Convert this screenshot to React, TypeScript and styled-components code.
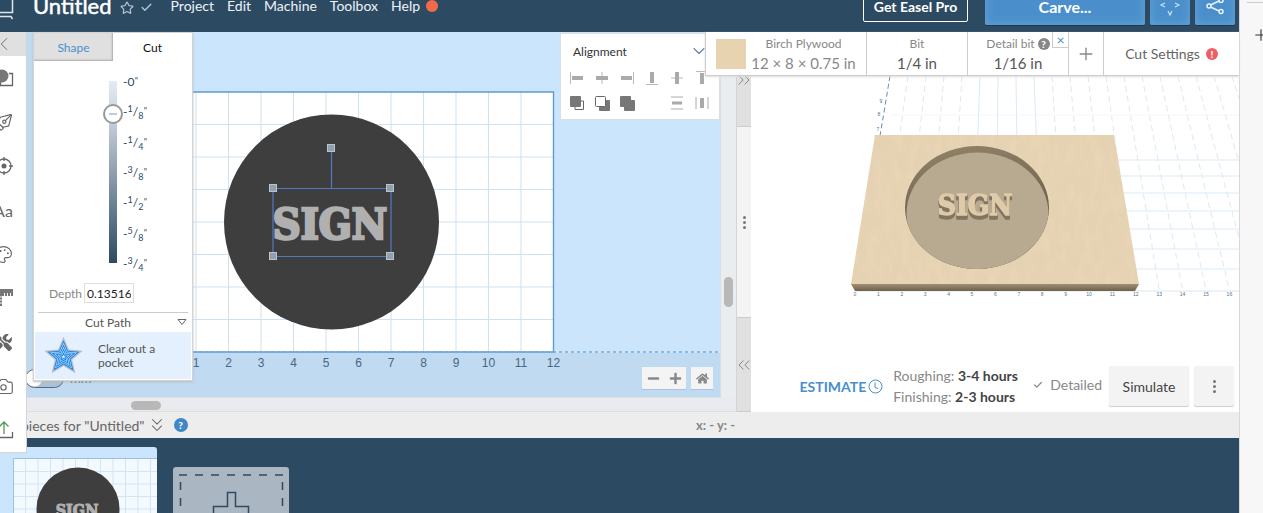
import React from 'react';
import styled, { createGlobalStyle } from 'styled-components';
import {
  Camera, ChevronDown, ChevronLeft, ChevronsDown, ChevronsLeft, ChevronsRight,
  Check, Palette, PenTool, Plus, Star,
} from 'lucide-react';
import { FaHome, FaMinus, FaPlus, FaTools } from 'react-icons/fa';

const navy = '#2d4a63';
const blue = '#4a8fcb';

const Global = createGlobalStyle`
  * { box-sizing: border-box; }
  html, body { margin: 0; height: 100%; overflow: hidden; }
  body { font-family: Lato, "Liberation Sans", sans-serif; font-size: 14px; color: #555; background: #f7f7f7; }
  #root { height: 100%; }
  button, input { font: inherit; color: inherit; margin: 0; }
  button { cursor: pointer; padding: 0; border: 0; background: none; }
  svg { display: block; flex: none; }
`;

const Page = styled.div`
  display: flex;
  height: 100vh;
  overflow: hidden;
`;
const Main = styled.main`
  position: relative;
  flex: 1;
  min-width: 0;
  display: flex;
  flex-direction: column;
  border-right: 1px solid #d8d8d8;
  background: #fff;
`;
const BrowserRail = styled.aside`
  width: 23px;
  overflow: hidden;
  padding: 7px 0 0 7px;
  background: #f7f7f7;
`;
const RailTabs = styled.div`
  width: 24px;
  height: 56px;
  margin-top: -5px;
  border-top: 1px solid #ccc;
  padding: 23px 0 0 5px;
  color: #333;
`;

/* Header */
const Header = styled.header`
  flex: none;
  display: flex;
  align-items: center;
  height: 52px;
  margin-top: -20px;
  padding-right: 4px;
  background: ${navy};
  color: #eef3f8;
`;
const Title = styled.h1`
  margin: 0 8px 0 19px;
  font-size: 22px;
  line-height: 28px;
  font-weight: 400;
  color: #fff;
  -webkit-text-stroke: 0.5px #fff;
`;
const TitleIcons = styled.div`
  display: flex;
  gap: 6px;
  padding-top: 4px;
  color: #b7c6d4;
`;
const Nav = styled.nav`
  display: flex;
  align-items: center;
  gap: 13px;
  margin-left: 18px;
  flex: 1;
`;
const NavLink = styled.a`
  color: #eef3f8;
  text-decoration: none;
  line-height: 20px;
`;
const Dot = styled.span`
  width: 12px;
  height: 12px;
  border-radius: 50%;
  margin-left: -7px;
  background: #f26b48;
`;
const ProButton = styled.button`
  width: 105px;
  height: 32px;
  margin-right: 17px;
  border: 1px solid #fff;
  border-radius: 2px;
  font-weight: 700;
  color: #fff;
`;
const ActionButton = styled.button<{ $wide?: boolean }>`
  display: flex;
  align-items: center;
  justify-content: center;
  width: ${(p) => (p.$wide ? 160 : 40)}px;
  height: 38px;
  border-radius: 2px;
  background: ${blue};
  box-shadow: inset 0 0 10px #68a3d6, 0 1px 0 #20384d;
  font-size: 16px;
  font-weight: 700;
  color: #fff;
`;
const ActionGroup = styled.div`
  display: flex;
  gap: 5px;
`;

/* Workspace */
const Workspace = styled.section`
  flex: none;
  display: flex;
  height: 380px;
`;
const Editor = styled.div`
  position: relative;
  flex: 736 1 0;
  min-width: 0;
  display: grid;
  grid-template: 1fr 15px / 1fr 15px;
  background: #eaebee;
`;
const Surface = styled.div`
  position: relative;
  overflow: hidden;
  background: #cbe5fd;
  border-right: 1px solid #dcdfe2;
  > svg { width: 100%; height: 100%; }
`;
const VTrack = styled.div`
  padding: 245px 3px 0;
  background: #e9edf0;
`;
const HTrack = styled.div`
  padding: 3px 0 0 131px;
  border-top: 1px solid #dcdfe2;
  border-bottom: 1px solid #dcdfe2;
`;
const Thumb = styled.div<{ $w: number; $h: number }>`
  width: ${(p) => p.$w}px;
  height: ${(p) => p.$h}px;
  border-radius: 5px;
  background: #b8b8b8;
`;
const Corner = styled.div`
  border-bottom: 1px solid #dcdfe2;
`;
const ZoomControls = styled.div`
  position: absolute;
  right: 7px;
  bottom: 8px;
  display: flex;
  gap: 5px;
  color: #888;
`;
const ZoomGroup = styled.div`
  display: flex;
  background: #f4f4f4;
  box-shadow: 0 1px 0 #a9c4dc;
`;
const ZoomButton = styled.button`
  display: flex;
  align-items: center;
  justify-content: center;
  width: 22px;
  height: 22px;
`;
const UnitToggle = styled.label`
  position: absolute;
  left: 25px;
  bottom: 9px;
  display: flex;
  align-items: center;
  gap: 6px;
  font-size: 13px;
  line-height: 20px;
  color: #4a6683;
`;
const Switch = styled.input`
  appearance: none;
  width: 39px;
  height: 19px;
  border: 1px solid #667;
  border-radius: 10px;
  background: radial-gradient(circle at 8px 8px, #fff 8px, #a9c2d9 9px);
`;

const Splitter = styled.div`
  flex: none;
  width: 15px;
  display: flex;
  flex-direction: column;
  border-left: 1px solid #d4d4d4;
  background: #f4f4f4;
  color: #888;
`;
const SplitButton = styled.button`
  display: flex;
  align-items: center;
  justify-content: center;
  height: 95px;
  background: #e0e0e0;
  border: solid #ccc;
  border-width: 1px 0;
`;
const Grip = styled.div`
  flex: 1;
  display: flex;
  flex-direction: column;
  align-items: center;
  justify-content: center;
  gap: 2px;
`;
const GripDot = styled.span`
  width: 3px;
  height: 3px;
  border-radius: 50%;
  background: #777;
`;

/* Preview */
const Preview = styled.div`
  flex: 488 1 0;
  min-width: 0;
  display: flex;
  flex-direction: column;
  background: #fff;
`;
const Scene = styled.div`
  flex: 1;
  overflow: hidden;
  > svg { width: 100%; height: 100%; }
`;
const EstimateRow = styled.div`
  display: flex;
  align-items: center;
  justify-content: flex-end;
  height: 50px;
  padding: 0 5px 2px 0;
`;
const EstimateLink = styled.a`
  display: flex;
  align-items: center;
  gap: 2px;
  margin-right: 10px;
  color: ${blue};
  font-weight: 700;
  text-decoration: none;
`;
const Times = styled.div`
  width: 124px;
  margin-right: 16px;
  line-height: 21px;
  color: #888;
  white-space: nowrap;
  strong { color: #444; }
`;
const Detailed = styled.span`
  display: flex;
  align-items: center;
  gap: 7px;
  margin-right: 7px;
  padding-bottom: 3px;
  color: #888;
`;
const GreyButton = styled.button<{ $w: number }>`
  display: flex;
  flex-direction: column;
  gap: 2px;
  align-items: center;
  justify-content: center;
  width: ${(p) => p.$w}px;
  height: 40px;
  margin-left: ${(p) => (p.$w < 60 ? 5 : 0)}px;
  border-radius: 2px;
  background: #f3f3f3;
  box-shadow: 0 1px 1px #ccc;
  color: #444;
`;

/* Overlays */
const ToolRail = styled.div`
  position: absolute;
  z-index: 3;
  left: -19px;
  top: 32px;
  width: 46px;
  background: #fff;
  border-right: 1px solid #d4d4d4;
  border-bottom: 1px solid #d4d4d4;
  color: #666;
`;
const Tool = styled.button<{ $collapse?: boolean }>`
  display: flex;
  align-items: center;
  justify-content: center;
  width: 100%;
  height: ${(p) => (p.$collapse ? 24 : 44)}px;
  background: ${(p) => (p.$collapse ? '#e0e0e0' : '#fff')};
  font-size: 16px;
`;

const CutPanel = styled.section`
  position: absolute;
  z-index: 2;
  left: 33px;
  top: 32px;
  width: 160px;
  background: #fff;
  border: 1px solid #d4d4d4;
  box-shadow: 0 1px 2px #bbb;
  font-size: 12px;
`;
const Tabs = styled.div`
  display: grid;
  grid-template-columns: 1fr 1fr;
`;
const Tab = styled.button<{ $on?: boolean }>`
  height: 28px;
  background: ${(p) => (p.$on ? '#fff' : '#e0e0e0')};
  color: ${(p) => (p.$on ? '#111' : blue)};
  box-shadow: ${(p) => (p.$on ? 'none' : 'inset -1px -1px 2px #aaa')};
`;
const DepthScale = styled.div`
  display: flex;
  height: 202px;
  margin-top: 10px;
  padding-left: 69px;
`;
const DepthSlider = styled.input`
  appearance: none;
  writing-mode: vertical-lr;
  width: 20px;
  height: 202px;
  background: linear-gradient(#e4ebf2, #c8d3de 20%, ${navy}) center / 8px 182px no-repeat;
  &::-webkit-slider-thumb {
    appearance: none;
    width: 20px;
    height: 20px;
    border: 2px solid #999;
    border-radius: 50%;
    background: linear-gradient(#b9cbdc, #b9cbdc) center / 8px 2px no-repeat #fff;
  }
`;
const Marks = styled.ol`
  list-style: none;
  margin: 1px 0 0;
  padding: 0;
  height: 202px;
  display: flex;
  flex-direction: column;
  justify-content: space-between;
  color: ${navy};
`;
const Mark = styled.li`
  height: 20px;
  line-height: 20px;
  sup, sub, i { font-size: 9px; line-height: 0; }
  i { vertical-align: 2px; }
  sup { vertical-align: 4px; }
  sub { vertical-align: -3px; }
`;
const DepthField = styled.label`
  display: flex;
  align-items: center;
  gap: 2px;
  margin: 10px 0 0 15px;
  color: #888;
`;
const DepthInput = styled.input`
  width: 50px;
  height: 20px;
  padding: 0 2px;
  border: 1px solid #ddd;
  color: #222;
`;
const PathHeading = styled.button`
  display: flex;
  align-items: center;
  justify-content: flex-end;
  gap: 46px;
  width: 150px;
  height: 20px;
  margin: 9px 0 0 4px;
  padding-right: 1px;
  border-top: 1px solid #ccc;
`;
const PathOption = styled.button`
  display: flex;
  align-items: center;
  gap: 14px;
  width: 156px;
  height: 47px;
  margin: 0 1px 1px;
  padding-left: 8px;
  background: #e4f0fd;
  text-align: left;
  line-height: 14px;
`;

const AlignPanel = styled.section`
  position: absolute;
  left: 560px;
  top: 1px;
  width: 160px;
  height: 87px;
  padding: 7px 10px;
  background: #fff;
  border: 1px solid #dcdfe2;
`;
const AlignTitle = styled.button`
  display: flex;
  align-items: center;
  justify-content: space-between;
  width: 136px;
  height: 20px;
  margin: 0 0 10px 2px;
  font-size: 12px;
  color: #333;
`;
const AlignGrid = styled.div`
  display: grid;
  grid-template-columns: repeat(6, 25px);
  row-gap: 11px;
  margin-left: -1px;
`;
const AlignButton = styled.button<{ $gap?: boolean }>`
  height: 14px;
  width: 14px;
  grid-column-start: ${(p) => (p.$gap ? 5 : 'auto')};
`;

const MaterialBar = styled.section`
  position: absolute;
  z-index: 4;
  right: 0;
  top: 32px;
  display: flex;
  height: 44px;
  background: #fff;
  border: solid #ccc;
  border-width: 0 0 1px 1px;
  box-shadow: 0 1px 2px #ddd;
`;
const BarCell = styled.button<{ $w: number }>`
  position: relative;
  display: flex;
  align-items: center;
  justify-content: center;
  gap: 5px;
  width: ${(p) => p.$w}px;
  color: #888;
  & + & { border-left: 1px solid #ccc; }
`;
const CellText = styled.span<{ $dark?: boolean }>`
  display: flex;
  flex-direction: column;
  align-items: center;
  padding-top: 2px;
  white-space: nowrap;
  font-size: 12px;
  line-height: 16px;
  > b { font-size: 15px; line-height: 22px; font-weight: 400; color: ${(p) => (p.$dark ? '#555' : '#888')}; }
`;
const CellLabel = styled.span`
  display: flex;
  align-items: center;
  gap: 3px;
`;
const Swatch = styled.span`
  width: 30px;
  height: 30px;
  background: #e8d3b0;
`;
const CloseBadge = styled.span`
  position: absolute;
  right: 0;
  top: 0;
  width: 16px;
  height: 16px;
  border: solid #ccc;
  border-width: 0 0 1px 1px;
  line-height: 16px;
  color: ${blue};
`;
const RoundBadge = styled.span<{ $bg: string; $size: number }>`
  display: inline-block;
  width: ${(p) => p.$size}px;
  height: ${(p) => p.$size}px;
  border-radius: 50%;
  background: ${(p) => p.$bg};
  font-size: 10px;
  line-height: ${(p) => p.$size}px;
  font-weight: 900;
  text-align: center;
  color: #fff;
`;
const Settings = styled.span`
  display: flex;
  align-items: center;
  gap: 6px;
  color: #666;
`;

/* Workpieces */
const PieceBar = styled.div`
  flex: none;
  display: flex;
  align-items: center;
  height: 26px;
  padding-left: 21px;
  background: #ededed;
`;
const PieceName = styled.button`
  display: flex;
  align-items: center;
  gap: 1px;
  margin-right: 6px;
  color: #666;
`;
const Coordinates = styled.span`
  position: absolute;
  left: 696px;
  font-size: 13px;
  font-weight: 700;
  color: #888;
`;
const PieceStrip = styled.div`
  flex: 1;
  display: flex;
  align-items: flex-start;
  gap: 16px;
  padding-top: 9px;
  overflow: hidden;
  background: ${navy};
`;
const PieceThumb = styled.button`
  width: 157px;
  height: 116px;
  border-radius: 0 3px 0 0;
  background: #cbe5fd;
  overflow: hidden;
`;
const AddPiece = styled.button`
  width: 116px;
  height: 84px;
  margin-top: 20px;
  border-radius: 3px;
  background: #aab6c2;
`;

const SlabText = styled.text`
  font-family: "DejaVu Serif Condensed", "DejaVu Serif", serif;
  font-weight: 700;
  text-anchor: middle;
  stroke-linejoin: miter;
`;
const RaisedText = styled(SlabText)`
  filter: drop-shadow(0 1px 0 #82755f) drop-shadow(0 1px 0 #82755f) drop-shadow(0 2px 0 #82755f);
`;

function DesignSurface() {
  const xs = Array.from({ length: 12 }, (_, i) => 196 + i * 32.5);
  const ys = Array.from({ length: 7 }, (_, i) => 92.5 + i * 32.5);
  return (
    <svg role="img" aria-label="Design canvas">
      <rect x="0" y="0" width="33" height="365" fill="#bfdaf1" />
      <rect x="0" y="321" width="100%" height="44" fill="#bfdaf1" />
      <rect x="163" y="60" width="390" height="260" fill="#fff" />
      <g stroke="#cfe0f0">
        {xs.map((x) => <line key={x} x1={x} x2={x} y1="60" y2="320" />)}
        {ys.map((y) => <line key={y} x1="163" x2="553" y1={y} y2={y} />)}
      </g>
      <path d="M163 60H553.5V320H163" fill="none" stroke="#5e9bd0" strokeWidth="1.4" />
      <line x1="163" x2="100%" y1="320" y2="320" stroke="#76abdc" strokeWidth="1.6" strokeDasharray="3 3" />
      <circle cx="331.5" cy="190" r="107.5" fill="#3e3e3e" />
      <SlabText x="330" y="207" fontSize="43" fill="#b0b0b0" stroke="#b0b0b0" strokeWidth="2.6">SIGN</SlabText>
      <path d="M273 156.5H391V224.5H273ZM331.5 156V118" fill="none" stroke="#5578c4" strokeWidth="1.2" />
      <g fill="#93a0ab" stroke="#b8c4ce">
        {[[273, 156], [390, 156], [273, 224], [390, 224], [331, 116]].map(([x, y]) => (
          <rect key={`${x}-${y}`} x={x - 3.5} y={y - 3.5} width="7" height="7" />
        ))}
      </g>
      <g fontFamily='"Liberation Sans", sans-serif' fontSize="12" fill="#4a6683" textAnchor="middle">
        {xs.map((x, i) => <text key={x} x={x} y="335">{i + 1}</text>)}
      </g>
    </svg>
  );
}

function BoardScene() {
  const far = (k: number) => 139 + 18 * k;
  const near = (k: number) => 104 + 23.4 * k;
  return (
    <svg role="img" aria-label="Carved board preview">
      <defs>
        <linearGradient id="edge" x2="0" y2="1">
          <stop offset="0" stopColor="#a08f74" /><stop offset="1" stopColor="#6d604c" />
        </linearGradient>
        <linearGradient id="wall" x2="0.2" y2="1">
          <stop offset="0" stopColor="#93836a" /><stop offset="1" stopColor="#5c5140" />
        </linearGradient>
        <filter id="grain" x="0" y="0" width="100%" height="100%">
          <feTurbulence type="fractalNoise" baseFrequency="0.12 0.05" numOctaves="3" seed="4" />
          <feColorMatrix values="0 0 0 0 .93  0 0 0 0 .76  0 0 0 0 .5  1.6 0 0 0 -.6" />
          <feComposite in2="SourceGraphic" operator="in" />
        </filter>
      </defs>
      <g stroke="#dbe9f5">
        {Array.from({ length: 24 }, (_, i) => i + 1).map((k) => (
          <line key={k} x1={far(k)} y1="44" x2={near(k)} y2="258" strokeDasharray={k > 4 && k < 9 ? undefined : '6 4'} />
        ))}
        {[128, 144, 161, 179, 197, 217, 237].map((y) => <line key={y} x1="360" x2="100%" y1={y} y2={y} />)}
        <path d="M140 83H488" stroke="#f3f6f9" />
        <path d="M104 259H488" stroke="#dfe5ec" />
      </g>
      <path d="M139 44L129 104" stroke="#6c8aa8" strokeDasharray="5 3" />
      <path d="M124 103H363L388 252H100Z" fill="#e5d2b3" />
      <path d="M124 103H363L388 252H100Z" fill="#e5d2b3" filter="url(#grain)" opacity="0.35" />
      <path d="M100 252H388L384 259H104Z" fill="url(#edge)" />
      <ellipse cx="226" cy="175.5" rx="72" ry="61.5" fill="url(#wall)" />
      <clipPath id="pocket"><ellipse cx="226" cy="175.5" rx="72" ry="61.5" /></clipPath>
      <ellipse cx="226.5" cy="182" rx="71" ry="61.5" fill="#b8aa90" clipPath="url(#pocket)" />
      <RaisedText x="224" y="183" fontSize="28" fill="#dfcba9" stroke="#dfcba9" strokeWidth="1.4">SIGN</RaisedText>
      <g fill="#4f7396" fontSize="5" textAnchor="middle" fontFamily='"Liberation Sans", sans-serif'>
        {Array.from({ length: 17 }, (_, k) => <text key={k} x={near(k)} y="264">{k}</text>)}
        <text x="130" y="71">9</text><text x="128" y="84">8</text><text x="127" y="99">7</text>
      </g>
    </svg>
  );
}

function PocketStar() {
  const points = Array.from({ length: 10 }, (_, i) => {
    const r = i % 2 ? 9 : 20;
    const a = (i * Math.PI) / 5 - Math.PI / 2;
    return `${(r * Math.cos(a)).toFixed(1)},${(r * Math.sin(a)).toFixed(1)}`;
  }).join(' ');
  const rings: [number, string][] = [[1.06, '#b9bec3'], [0.88, '#1d86e8'], [0.74, '#d6eafc'], [0.67, '#1d86e8'], [0.53, '#d6eafc'], [0.46, '#1d86e8'], [0.33, '#d6eafc'], [0.26, '#1d86e8'], [0.12, '#d6eafc']];
  return (
    <svg width="41" height="40" viewBox="-21 -22 42 42" aria-hidden="true">
      {rings.map(([s, c]) => <polygon key={s} points={points} transform={`scale(${s})`} fill={c} />)}
    </svg>
  );
}

const alignIcons: { name: string; pale: string; bold: string }[] = [
  { name: 'Align left', pale: 'M.5 1V13', bold: 'M2 7H13' },
  { name: 'Align center', pale: 'M7 1V13', bold: 'M1 7H13' },
  { name: 'Align right', pale: 'M13.5 1V13', bold: 'M1 7H12' },
  { name: 'Align bottom', pale: 'M1 13.5H13', bold: 'M7 1V12' },
  { name: 'Align middle', pale: 'M1 7H13', bold: 'M7 1V13' },
  { name: 'Align top', pale: 'M1 .5H13', bold: 'M7 2V13' },
];

function AlignmentPanel() {
  const fills: [string, React.ReactNode][] = [
    ['Bring forward', <><path d="M5 5H13.5V13.5H5Z" fill="#fff" stroke="#666" /><rect width="11" height="11" rx="1" fill="#777" /></>],
    ['Send backward', <><rect x="4" y="4" width="11" height="11" rx="1" fill="#777" /><rect x=".5" y=".5" width="10" height="10" rx="1" fill="#fff" stroke="#666" /></>],
    ['Combine', <><rect width="11" height="11" rx="1" fill="#777" /><rect x="4" y="4" width="11" height="11" rx="1" fill="#777" /></>],
  ];
  return (
    <AlignPanel>
      <AlignTitle>Alignment<ChevronDown size={20} strokeWidth={1.3} color="#5d7f9f" /></AlignTitle>
      <AlignGrid>
        {alignIcons.map((i) => (
          <AlignButton key={i.name} aria-label={i.name}>
            <svg width="14" height="14"><path d={i.pale} stroke="#bbb" /><path d={i.bold} stroke="#aaa" strokeWidth="4" /></svg>
          </AlignButton>
        ))}
        {fills.map(([name, art]) => (
          <AlignButton key={name} aria-label={name}><svg width="15" height="15">{art}</svg></AlignButton>
        ))}
        <AlignButton $gap aria-label="Distribute vertically">
          <svg width="14" height="14"><path d="M1 1H13M1 13H13" stroke="#aaa" /><path d="M2 7H12" stroke="#aaa" strokeWidth="3" /></svg>
        </AlignButton>
        <AlignButton aria-label="Distribute horizontally">
          <svg width="14" height="14"><path d="M1 1V13M13 1V13" stroke="#aaa" /><path d="M7 2V12" stroke="#aaa" strokeWidth="4" /></svg>
        </AlignButton>
      </AlignGrid>
    </AlignPanel>
  );
}

function Tools() {
  const line = { fill: 'none', stroke: 'currentColor', strokeWidth: 1.3 };
  const tools: [string, React.ReactNode][] = [
    ['Shapes', <svg width="20" height="20"><path d="M15 5.5H18.5V17.5H6.5V14" {...line} /><circle cx="8" cy="8" r="6.5" fill="#777" /></svg>],
    ['Pen', <PenTool size={19} strokeWidth={1.5} transform="rotate(90)" />],
    ['Drill', <svg width="20" height="20"><circle cx="10" cy="10" r="7" {...line} /><circle cx="10" cy="10" r="2.5" fill="currentColor" /><path d="M10 1V5M10 15V19M1 10H5M15 10H19" {...line} /></svg>],
    ['Text', <span>Aa</span>],
    ['Icons', <Palette size={19} strokeWidth={1.4} />],
    ['Ruler', <svg width="20" height="20"><path d="M1 1H19V8H17V5H16V8H14V5H13V8H11V5H10V8H8V18H1Z" fill="#777" /><path d="M5 9H8M5 12H8M5 15H8" stroke="#fff" /></svg>],
    ['Apps', <FaTools size={17} />],
    ['Images', <Camera size={21} strokeWidth={1.3} />],
    ['Import', <svg width="20" height="20"><path d="M1 12V17.5H18.5V12" {...line} /><path d="M10 14V2M5.5 6.5L10 2L14.5 6.5" {...line} stroke="#4e9a4e" /></svg>],
  ];
  return (
    <ToolRail>
      <Tool $collapse aria-label="Collapse"><ChevronLeft size={22} strokeWidth={1} /></Tool>
      {tools.map(([name, icon]) => <Tool key={name} aria-label={name}>{icon}</Tool>)}
    </ToolRail>
  );
}

function Cut() {
  const marks: [string, string][] = [['1', '8'], ['1', '4'], ['3', '8'], ['1', '2'], ['5', '8'], ['3', '4']];
  return (
    <CutPanel>
      <Tabs><Tab>Shape</Tab><Tab $on>Cut</Tab></Tabs>
      <DepthScale>
        <DepthSlider type="range" min="0" max="0.75" step="0.00001" defaultValue="0.13516" aria-label="Cut depth" />
        <Marks>
          <Mark>-0<i>"</i></Mark>
          {marks.map(([n, d]) => <Mark key={n + d}>-<sup>{n}</sup>/<sub>{d}</sub><i>"</i></Mark>)}
        </Marks>
      </DepthScale>
      <DepthField>Depth<DepthInput defaultValue="0.13516" /></DepthField>
      <PathHeading>Cut Path<svg width="10" height="7"><path d="M1 .5H9L5 5.5Z" fill="none" stroke="#666" /></svg></PathHeading>
      <PathOption><PocketStar /><span>Clear out a<br />pocket</span></PathOption>
    </CutPanel>
  );
}

export default function App() {
  return (
    <Page>
      <Global />
      <Main>
        <Header>
          <svg width="14" height="36" fill="none" stroke="#dfe7ee" strokeWidth="1.5"><path d="M0 24.5H12.5V6M0 28.5H11L12.5 31" /></svg>
          <Title>Untitled</Title>
          <TitleIcons><Star size={14} strokeWidth={2} /><Check size={13} strokeWidth={2.5} /></TitleIcons>
          <Nav>
            {['Project', 'Edit', 'Machine', 'Toolbox', 'Help'].map((n) => <NavLink key={n} href="#">{n}</NavLink>)}
            <Dot />
          </Nav>
          <ProButton>Get Easel Pro</ProButton>
          <ActionGroup>
            <ActionButton $wide>Carve...</ActionButton>
            <ActionButton aria-label="Position">
              <svg width="22" height="22" fill="none" stroke="#c6ddf1" strokeWidth="1.3"><path d="M6 8L2 10L6 12M16 8L20 10L16 12M9 16L11 20L13 16M9 4L11 1L13 4" /></svg>
            </ActionButton>
            <ActionButton aria-label="Share">
              <svg width="18" height="18" fill="none" stroke="#e8f2fb" strokeWidth="1.5"><path d="M4.5 8L13 4M4.5 10L13 14" /><circle cx="3" cy="9" r="2" /><circle cx="15" cy="3.5" r="2" /><circle cx="15" cy="14.5" r="2" /></svg>
            </ActionButton>
          </ActionGroup>
        </Header>

        <Workspace>
          <Editor>
            <Surface>
              <DesignSurface />
              <UnitToggle><Switch type="checkbox" />mm</UnitToggle>
              <ZoomControls>
                <ZoomGroup>
                  <ZoomButton aria-label="Zoom out"><FaMinus size={13} /></ZoomButton>
                  <ZoomButton aria-label="Zoom in"><FaPlus size={13} /></ZoomButton>
                </ZoomGroup>
                <ZoomGroup><ZoomButton aria-label="Home"><FaHome size={13} /></ZoomButton></ZoomGroup>
              </ZoomControls>
              <AlignmentPanel />
            </Surface>
            <VTrack><Thumb $w={9} $h={30} /></VTrack>
            <HTrack><Thumb $w={30} $h={9} /></HTrack>
            <Corner />
          </Editor>
          <Splitter>
            <SplitButton aria-label="Expand canvas"><ChevronsRight size={20} strokeWidth={1.2} /></SplitButton>
            <Grip><GripDot /><GripDot /><GripDot /></Grip>
            <SplitButton aria-label="Expand preview"><ChevronsLeft size={20} strokeWidth={1.2} /></SplitButton>
          </Splitter>
          <Preview>
            <Scene><BoardScene /></Scene>
            <EstimateRow>
              <EstimateLink href="#">ESTIMATE
                <svg width="15" height="15" fill="none" stroke={blue}><circle cx="7.5" cy="7.5" r="6.5" /><path d="M7 3.5V8.5L10 9.5" /></svg>
              </EstimateLink>
              <Times>Roughing: <strong>3-4 hours</strong><br />Finishing: <strong>2-3 hours</strong></Times>
              <Detailed><Check size={10} strokeWidth={3} />Detailed</Detailed>
              <GreyButton $w={80}>Simulate</GreyButton>
              <GreyButton $w={40} aria-label="More"><GripDot /><GripDot /><GripDot /></GreyButton>
            </EstimateRow>
          </Preview>
        </Workspace>

        <PieceBar>
          <PieceName>pieces for "Untitled"<ChevronsDown size={22} strokeWidth={1.1} /></PieceName>
          <RoundBadge $bg="#3f87c6" $size={14}>?</RoundBadge>
          <Coordinates>x: - y: -</Coordinates>
        </PieceBar>
        <PieceStrip>
          <PieceThumb aria-label="Untitled workpiece">
            <svg width="157" height="116">
              <rect x="13" y="11" width="150" height="105" fill="#f2f9ff" />
              <g stroke="#d3e5f4">
                {Array.from({ length: 12 }, (_, i) => <path key={i} d={`M${25.5 + i * 12.5} 11V116`} />)}
                {Array.from({ length: 8 }, (_, i) => <path key={i} d={`M13 ${24.5 + i * 12.5}H157`} />)}
              </g>
              <path d="M157 11.5H13.5V116" fill="none" stroke="#9cc0df" />
              <circle cx="78" cy="62" r="41.5" fill="#3e3e3e" />
              <SlabText x="77" y="69" fontSize="16" fill="#b0b0b0" stroke="#b0b0b0" strokeWidth="1">SIGN</SlabText>
            </svg>
          </PieceThumb>
          <AddPiece aria-label="Add workpiece">
            <svg width="116" height="84" fill="none" stroke="#334a5e">
              <path d="M6 8H110" strokeWidth="1.5" strokeDasharray="8 8" />
              <path d="M7.5 15V80M109.5 15V80" strokeWidth="1.5" strokeDasharray="8 8" />
              <path d="M54.5 25.5H62.5V39.5H75.5V47.5H62.5V61.5H54.5V47.5H40.5V39.5H54.5Z" strokeWidth="1.5" />
            </svg>
          </AddPiece>
        </PieceStrip>

        <Tools />
        <Cut />
        <MaterialBar>
          <BarCell $w={160}>
            <Swatch />
            <CellText>Birch Plywood<b>12 × 8 × 0.75 in</b></CellText>
          </BarCell>
          <BarCell $w={101}><CellText $dark>Bit<b>1/4 in</b></CellText></BarCell>
          <BarCell $w={101}>
            <CellText $dark><CellLabel>Detail bit <RoundBadge $bg="#888" $size={12}>?</RoundBadge></CellLabel><b>1/16 in</b></CellText>
            <CloseBadge>×</CloseBadge>
          </BarCell>
          <BarCell $w={35} aria-label="Add bit"><Plus size={20} strokeWidth={1.6} /></BarCell>
          <BarCell $w={136}><Settings>Cut Settings <RoundBadge $bg="#ee5f64" $size={12}>!</RoundBadge></Settings></BarCell>
        </MaterialBar>
      </Main>
      <BrowserRail><RailTabs><Plus size={18} strokeWidth={1.5} /></RailTabs></BrowserRail>
    </Page>
  );
}
